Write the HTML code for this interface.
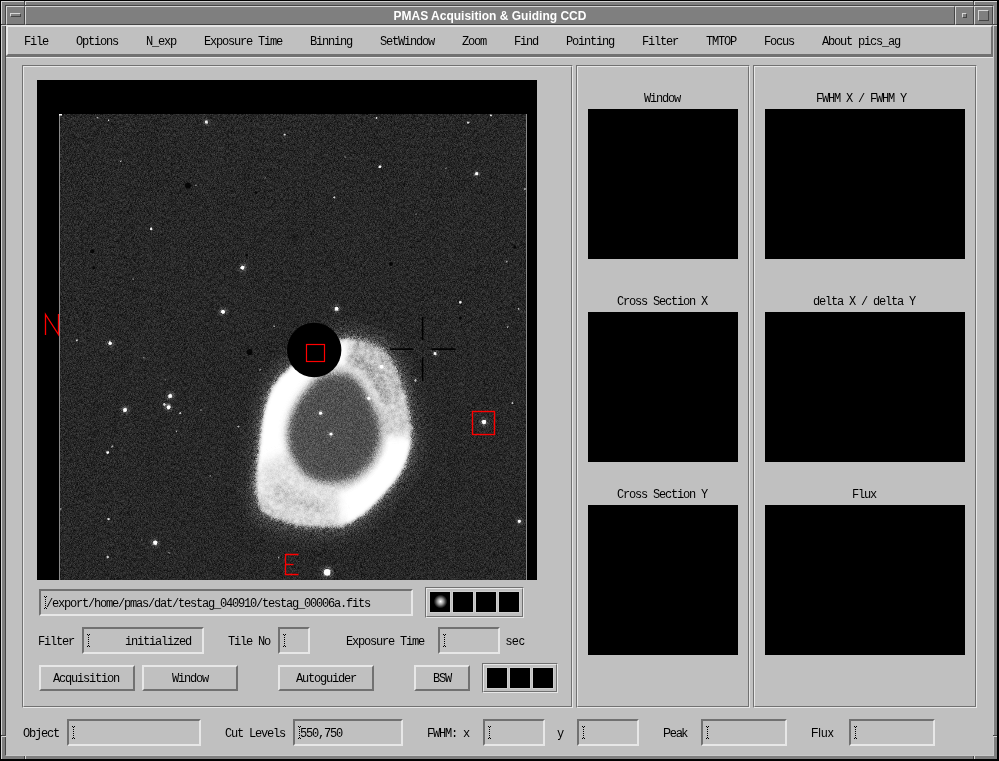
<!DOCTYPE html>
<html><head><meta charset="utf-8">
<style>
html,body{margin:0;padding:0;}
body{width:999px;height:761px;position:relative;overflow:hidden;background:#000;font-family:"Liberation Mono",monospace;}
div{box-sizing:border-box;}
.a{position:absolute;}
.t{position:absolute;font:12px "Liberation Mono",monospace;letter-spacing:-1.2px;color:#000;white-space:pre;line-height:14px;will-change:transform;}
.s{position:absolute;font:12px "Liberation Sans",sans-serif;color:#000;white-space:pre;line-height:14px;will-change:transform;}
.fr{position:absolute;background:#7f7f7f;}
.wb{position:absolute;border-top:1px solid #d6d6d6;border-left:1px solid #d6d6d6;border-right:1px solid #454545;border-bottom:1px solid #454545;background:#7f7f7f;}
.fld{position:absolute;border-style:solid;border-width:2px;border-color:#717171 #e7e7e7 #e7e7e7 #717171;background:#c0c0c0;}
.btn{position:absolute;border-style:solid;border-width:2px;border-color:#e7e7e7 #717171 #717171 #e7e7e7;background:#c0c0c0;}
.eo{position:absolute;border-style:solid;border-width:1px;border-color:#717171 #e7e7e7 #e7e7e7 #717171;}
.ei{position:absolute;left:0;top:0;right:0;bottom:0;border-style:solid;border-width:1px;border-color:#e7e7e7 #717171 #717171 #e7e7e7;}
.blk{position:absolute;background:#000;}
.cur{position:absolute;width:4px;height:13px;}
</style></head><body>
<!-- window manager frame -->
<div class="fr" style="left:1px;top:1px;width:996px;height:758px;border-top:1px solid #d6d6d6;border-left:1px solid #d6d6d6;"></div>
<div class="a" style="left:5px;top:5px;width:989px;height:751px;border-top:1px solid #454545;border-left:1px solid #454545;border-right:1px solid #c9c9c9;border-bottom:1px solid #c9c9c9;"></div>
<!-- corner separators -->
<div class="a" style="left:1px;top:24px;width:5px;height:1px;background:#454545"></div>
<div class="a" style="left:1px;top:25px;width:5px;height:1px;background:#d6d6d6"></div>
<div class="a" style="left:993px;top:24px;width:4px;height:1px;background:#454545"></div>
<div class="a" style="left:993px;top:25px;width:4px;height:1px;background:#d6d6d6"></div>
<div class="a" style="left:1px;top:735px;width:5px;height:1px;background:#454545"></div>
<div class="a" style="left:1px;top:736px;width:5px;height:1px;background:#d6d6d6"></div>
<div class="a" style="left:993px;top:735px;width:4px;height:1px;background:#454545"></div>
<div class="a" style="left:993px;top:736px;width:4px;height:1px;background:#d6d6d6"></div>
<div class="a" style="left:24px;top:1px;width:1px;height:4px;background:#454545"></div>
<div class="a" style="left:25px;top:1px;width:1px;height:4px;background:#d6d6d6"></div>
<div class="a" style="left:973px;top:1px;width:1px;height:4px;background:#454545"></div>
<div class="a" style="left:974px;top:1px;width:1px;height:4px;background:#d6d6d6"></div>
<div class="a" style="left:24px;top:756px;width:1px;height:3px;background:#454545"></div>
<div class="a" style="left:25px;top:756px;width:1px;height:3px;background:#d6d6d6"></div>
<div class="a" style="left:973px;top:756px;width:1px;height:3px;background:#454545"></div>
<div class="a" style="left:974px;top:756px;width:1px;height:3px;background:#d6d6d6"></div>
<!-- title bar -->
<div class="wb" style="left:6px;top:6px;width:19px;height:19px;"></div>
<div class="a" style="left:10px;top:13px;width:11px;height:4px;border-top:1px solid #d6d6d6;border-left:1px solid #d6d6d6;border-right:1px solid #454545;border-bottom:1px solid #454545;"></div>
<div class="wb" style="left:25px;top:6px;width:930px;height:19px;"></div>
<div class="a" style="left:25px;top:8px;width:930px;height:17px;font:bold 12px 'Liberation Sans',sans-serif;color:#fff;text-align:center;line-height:17px;will-change:transform;">PMAS Acquisition &amp; Guiding CCD</div>
<div class="wb" style="left:955px;top:6px;width:19px;height:19px;"></div>
<div class="a" style="left:962px;top:13px;width:5px;height:5px;border-top:1px solid #d6d6d6;border-left:1px solid #d6d6d6;border-right:1px solid #454545;border-bottom:1px solid #454545;"></div>
<div class="wb" style="left:974px;top:6px;width:19px;height:19px;"></div>
<div class="a" style="left:978px;top:10px;width:11px;height:11px;border-top:1px solid #d6d6d6;border-left:1px solid #d6d6d6;border-right:1px solid #454545;border-bottom:1px solid #454545;"></div>
<!-- client -->
<div class="a" style="left:6px;top:25px;width:987px;height:730px;background:#c0c0c0;"></div>
<!-- menubar -->
<div class="btn" style="left:6px;top:25px;width:987px;height:31px;"></div>
<div class="a" style="left:6px;top:56px;width:987px;height:1px;background:#717171"></div>
<div class="a" style="left:6px;top:57px;width:987px;height:1px;background:#e7e7e7"></div>
<div class="t" style="left:24px;top:35px">File</div>
<div class="t" style="left:76px;top:35px">Options</div>
<div class="t" style="left:146px;top:35px">N_exp</div>
<div class="t" style="left:204px;top:35px">Exposure Time</div>
<div class="t" style="left:310px;top:35px">Binning</div>
<div class="t" style="left:380px;top:35px">SetWindow</div>
<div class="t" style="left:462px;top:35px">Zoom</div>
<div class="t" style="left:514px;top:35px">Find</div>
<div class="t" style="left:566px;top:35px">Pointing</div>
<div class="t" style="left:642px;top:35px">Filter</div>
<div class="t" style="left:706px;top:35px">TMTOP</div>
<div class="t" style="left:764px;top:35px">Focus</div>
<div class="t" style="left:822px;top:35px">About pics_ag</div>

<!-- panels -->
<div class="eo" style="left:22px;top:65px;width:551px;height:643px;"><div class="ei"></div></div>
<div class="eo" style="left:576px;top:65px;width:174px;height:643px;"><div class="ei"></div></div>
<div class="eo" style="left:753px;top:65px;width:224px;height:643px;"><div class="ei"></div></div>

<!-- image area -->
<div class="blk" style="left:37px;top:80px;width:500px;height:500px;"></div>
<!--IMAGE-->
<svg class="a" style="left:37px;top:80px" width="500" height="500" viewBox="37 80 500 500">
<defs>
<clipPath id="ic"><rect x="59" y="114" width="468" height="466"/></clipPath>
<filter id="b1" x="-50%" y="-50%" width="200%" height="200%"><feGaussianBlur stdDeviation="1.5"/></filter>
<filter id="b2" x="-50%" y="-50%" width="200%" height="200%"><feGaussianBlur stdDeviation="2.5"/></filter>
<filter id="b3" x="-50%" y="-50%" width="200%" height="200%"><feGaussianBlur stdDeviation="3.5"/></filter>
<filter id="b4" x="-50%" y="-50%" width="200%" height="200%"><feGaussianBlur stdDeviation="5"/></filter>
<filter id="b8" x="-50%" y="-50%" width="200%" height="200%"><feGaussianBlur stdDeviation="8"/></filter>
<filter id="sb" x="-100%" y="-100%" width="300%" height="300%"><feGaussianBlur stdDeviation="0.6"/></filter>
<filter id="noise" x="0" y="0" width="100%" height="100%" color-interpolation-filters="sRGB">
<feTurbulence type="fractalNoise" baseFrequency="1.7" numOctaves="1" seed="11"/>
<feGaussianBlur stdDeviation="0.55"/>
<feColorMatrix type="matrix" values="1.3 0 0 0 -0.15  1.3 0 0 0 -0.15  1.3 0 0 0 -0.15  0 0 0 0 1"/>
</filter>
<filter id="mott" x="0" y="0" width="100%" height="100%" color-interpolation-filters="sRGB">
<feTurbulence type="fractalNoise" baseFrequency="0.2" numOctaves="2" seed="4"/>
<feColorMatrix type="matrix" values="1.4 0 0 0 -0.2  1.4 0 0 0 -0.2  1.4 0 0 0 -0.2  0 0 0 0 1"/>
</filter>
<clipPath id="ringclip"><polygon points="343.3,336.1 345.3,336.0 347.5,336.1 349.7,336.3 352.0,336.6 354.2,336.9 356.5,337.3 358.7,337.7 360.8,338.1 362.9,338.6 365.0,339.1 367.0,339.7 369.0,340.4 371.0,341.1 372.8,341.8 374.6,342.5 376.3,343.3 377.8,344.0 379.3,344.8 380.6,345.5 381.8,346.3 383.0,347.2 384.2,348.1 385.4,349.2 386.6,350.5 387.8,351.9 389.1,353.6 390.3,355.4 391.5,357.3 392.7,359.3 393.8,361.2 394.9,363.1 395.9,364.9 396.7,366.5 397.5,367.9 398.2,369.2 398.9,370.5 399.5,372.0 400.2,373.6 400.9,375.5 401.7,377.8 402.7,380.5 403.7,383.6 404.9,386.9 406.0,390.4 407.1,394.1 408.2,397.8 409.1,401.4 409.9,404.9 410.5,408.3 411.0,411.8 411.5,415.3 411.9,418.9 412.1,422.3 412.4,425.7 412.5,428.9 412.6,431.9 412.7,434.6 412.8,437.1 412.8,439.5 412.7,441.7 412.5,443.9 412.2,446.1 411.8,448.4 411.3,450.9 410.7,453.5 409.9,456.2 409.1,458.9 408.1,461.6 407.1,464.4 405.9,467.1 404.5,469.9 403.1,472.6 401.4,475.4 399.6,478.1 397.6,480.9 395.5,483.6 393.3,486.4 391.1,489.1 388.8,491.7 386.6,494.3 384.4,496.8 382.1,499.3 379.9,501.8 377.5,504.2 375.2,506.6 372.8,508.9 370.3,511.1 367.8,513.2 365.3,515.2 362.8,517.2 360.2,519.2 357.5,521.0 354.8,522.7 352.0,524.3 349.2,525.7 346.2,526.8 343.1,527.7 339.8,528.4 336.3,528.9 332.9,529.2 329.4,529.4 326.0,529.5 322.7,529.6 319.6,529.7 316.8,529.8 314.1,529.8 311.5,529.8 309.0,529.8 306.5,529.6 304.0,529.4 301.6,529.1 299.0,528.7 296.5,528.2 293.8,527.6 291.2,526.9 288.6,526.1 286.0,525.3 283.4,524.4 280.9,523.4 278.4,522.5 275.9,521.6 273.4,520.7 270.8,519.8 268.2,518.8 265.8,517.7 263.6,516.5 261.6,515.0 259.9,513.2 258.5,511.1 257.4,508.7 256.5,506.0 255.8,503.1 255.3,500.2 254.9,497.2 254.5,494.3 254.2,491.6 254.0,489.1 254.0,486.8 254.1,484.6 254.2,482.4 254.5,480.1 254.8,477.5 255.1,474.5 255.5,471.0 255.8,466.8 256.3,462.0 256.8,456.7 257.3,451.2 257.9,445.6 258.5,440.2 259.0,435.2 259.6,430.8 260.1,427.0 260.6,423.5 261.0,420.4 261.5,417.5 262.0,414.6 262.5,411.9 263.2,409.1 264.0,406.1 264.9,403.0 265.9,399.9 266.9,396.8 268.0,393.7 269.2,390.6 270.6,387.7 272.1,384.8 273.8,382.0 275.7,379.3 277.9,376.8 280.2,374.3 282.6,371.9 285.1,369.5 287.7,367.3 290.3,365.0 292.9,362.8 295.5,360.7 298.2,358.5 301.1,356.5 303.9,354.4 306.7,352.5 309.5,350.7 312.1,349.0 314.5,347.4 316.7,346.0 318.8,344.7 320.8,343.5 322.7,342.5 324.6,341.5 326.4,340.7 328.1,339.9 329.9,339.1 331.7,338.5 333.3,337.9 334.9,337.4 336.5,337.0 338.1,336.6 339.7,336.3 341.5,336.2"/></clipPath>
<mask id="nm" maskUnits="userSpaceOnUse" x="59" y="114" width="468" height="466"><rect x="59" y="114" width="468" height="466" fill="#fff"/><polygon points="343.0,339.0 344.9,339.0 347.0,339.1 349.2,339.3 351.4,339.5 353.6,339.8 355.8,340.2 357.9,340.6 360.0,341.0 362.0,341.5 364.0,342.0 366.0,342.6 367.9,343.2 369.8,343.8 371.6,344.5 373.4,345.3 375.0,346.0 376.5,346.7 377.9,347.4 379.2,348.2 380.4,348.9 381.5,349.8 382.7,350.7 383.8,351.8 385.0,353.0 386.2,354.4 387.4,356.0 388.6,357.8 389.8,359.7 390.9,361.6 392.0,363.4 393.0,365.3 394.0,367.0 394.9,368.5 395.6,369.9 396.3,371.2 396.9,372.5 397.5,373.9 398.2,375.4 398.9,377.3 399.7,379.5 400.6,382.1 401.6,385.1 402.7,388.4 403.8,391.8 404.9,395.3 405.9,398.9 406.8,402.4 407.6,405.8 408.2,409.1 408.7,412.5 409.2,416.0 409.5,419.4 409.8,422.7 410.0,426.0 410.2,429.1 410.3,432.0 410.4,434.7 410.4,437.1 410.4,439.4 410.3,441.6 410.2,443.7 409.9,445.9 409.5,448.1 409.0,450.5 408.4,453.0 407.7,455.6 406.8,458.2 405.9,460.9 404.9,463.6 403.7,466.3 402.4,468.9 401.0,471.6 399.4,474.2 397.6,476.9 395.7,479.6 393.6,482.3 391.5,484.9 389.3,487.5 387.2,490.1 385.0,492.6 382.8,495.1 380.7,497.5 378.5,499.9 376.2,502.3 373.9,504.6 371.6,506.8 369.2,509.0 366.8,511.0 364.3,513.0 361.9,514.9 359.3,516.8 356.8,518.6 354.1,520.2 351.5,521.8 348.7,523.1 345.8,524.2 342.8,525.1 339.6,525.7 336.2,526.2 332.8,526.5 329.5,526.7 326.2,526.8 323.0,526.9 320.0,527.0 317.2,527.1 314.6,527.1 312.1,527.1 309.6,527.0 307.2,526.9 304.9,526.7 302.5,526.4 300.0,526.0 297.5,525.5 295.0,524.9 292.4,524.2 289.9,523.5 287.4,522.7 284.9,521.8 282.4,520.9 280.0,520.0 277.6,519.1 275.1,518.2 272.6,517.4 270.1,516.4 267.7,515.4 265.6,514.2 263.6,512.7 262.0,511.0 260.7,508.9 259.6,506.6 258.7,504.0 258.1,501.2 257.5,498.3 257.1,495.5 256.8,492.7 256.5,490.0 256.3,487.6 256.3,485.4 256.3,483.3 256.5,481.1 256.8,478.8 257.0,476.3 257.4,473.4 257.7,470.0 258.1,465.9 258.5,461.2 259.0,456.1 259.5,450.8 260.1,445.4 260.6,440.1 261.2,435.3 261.7,431.0 262.2,427.3 262.6,423.9 263.1,420.9 263.5,418.0 264.0,415.3 264.6,412.6 265.2,409.9 266.0,407.0 266.9,404.0 267.8,401.0 268.8,398.0 269.9,395.0 271.0,392.0 272.4,389.1 273.8,386.3 275.5,383.6 277.4,381.0 279.4,378.5 281.7,376.1 284.0,373.8 286.5,371.5 289.0,369.3 291.5,367.1 294.0,365.0 296.5,362.9 299.2,360.8 302.0,358.8 304.7,356.8 307.5,355.0 310.1,353.2 312.6,351.5 315.0,350.0 317.2,348.6 319.2,347.4 321.2,346.3 323.0,345.2 324.8,344.3 326.5,343.5 328.3,342.7 330.0,342.0 331.7,341.4 333.3,340.8 334.8,340.3 336.4,339.9 337.9,339.5 339.5,339.3 341.2,339.1" fill="#8c8c8c" filter="url(#b2)"/></mask>
</defs>
<g clip-path="url(#ic)">
<rect x="59" y="114" width="468" height="466" fill="#272727"/>
<polygon points="344.1,329.2 346.2,329.2 348.5,329.3 350.9,329.5 353.3,329.8 355.8,330.1 358.2,330.5 360.5,330.9 362.8,331.4 365.0,331.9 367.2,332.5 369.4,333.1 371.5,333.8 373.6,334.5 375.6,335.3 377.5,336.1 379.3,336.9 380.9,337.7 382.5,338.5 383.9,339.3 385.2,340.1 386.5,341.1 387.8,342.1 389.0,343.3 390.3,344.6 391.6,346.2 392.9,347.9 394.3,349.9 395.5,351.9 396.8,354.0 398.0,356.1 399.1,358.1 400.2,360.0 401.1,361.7 402.0,363.2 402.7,364.6 403.4,366.0 404.1,367.6 404.8,369.3 405.6,371.3 406.5,373.8 407.5,376.6 408.6,379.9 409.8,383.5 411.0,387.3 412.2,391.2 413.3,395.1 414.3,399.0 415.2,402.7 415.8,406.3 416.4,410.1 416.9,413.9 417.3,417.6 417.6,421.3 417.8,424.9 418.0,428.3 418.1,431.5 418.2,434.4 418.3,437.1 418.2,439.6 418.2,442.0 418.0,444.4 417.7,446.8 417.3,449.2 416.7,451.9 416.0,454.6 415.2,457.5 414.3,460.3 413.3,463.3 412.2,466.2 410.9,469.2 409.5,472.1 407.9,475.1 406.1,478.0 404.2,480.9 402.1,483.9 399.8,486.8 397.5,489.7 395.1,492.6 392.7,495.4 390.3,498.2 387.9,500.9 385.5,503.6 383.1,506.2 380.6,508.8 378.1,511.4 375.6,513.8 372.9,516.2 370.3,518.4 367.6,520.6 364.8,522.7 362.1,524.8 359.3,526.7 356.4,528.6 353.4,530.2 350.3,531.7 347.2,532.9 343.8,533.9 340.3,534.6 336.6,535.1 332.9,535.4 329.2,535.7 325.6,535.8 322.1,535.9 318.8,536.0 315.7,536.1 312.9,536.1 310.1,536.1 307.4,536.1 304.8,535.9 302.2,535.7 299.5,535.3 296.8,534.9 294.0,534.4 291.2,533.7 288.5,533.0 285.7,532.1 282.9,531.3 280.1,530.3 277.4,529.3 274.8,528.3 272.1,527.3 269.4,526.4 266.6,525.4 263.9,524.4 261.3,523.2 258.9,521.9 256.8,520.3 255.0,518.4 253.5,516.1 252.3,513.5 251.4,510.7 250.7,507.6 250.1,504.5 249.6,501.3 249.3,498.2 248.9,495.3 248.7,492.6 248.7,490.2 248.8,487.9 249.0,485.5 249.2,483.0 249.6,480.2 249.9,477.0 250.3,473.3 250.7,468.8 251.1,463.7 251.7,458.0 252.3,452.1 252.9,446.2 253.5,440.5 254.1,435.1 254.7,430.4 255.2,426.3 255.7,422.6 256.2,419.3 256.7,416.1 257.2,413.1 257.8,410.2 258.5,407.2 259.4,404.0 260.4,400.7 261.4,397.4 262.5,394.1 263.6,390.8 265.0,387.5 266.4,384.3 268.0,381.2 269.9,378.3 271.9,375.4 274.2,372.7 276.6,370.0 279.2,367.5 281.9,365.0 284.7,362.5 287.5,360.1 290.2,357.8 293.0,355.5 295.9,353.2 299.0,351.0 302.0,348.8 305.0,346.7 307.9,344.8 310.7,343.0 313.3,341.3 315.7,339.8 317.9,338.4 320.1,337.2 322.1,336.1 324.1,335.1 326.0,334.1 327.9,333.3 329.8,332.5 331.7,331.8 333.4,331.2 335.1,330.6 336.8,330.2 338.5,329.8 340.3,329.5 342.1,329.3" fill="#4e4e4e" filter="url(#b8)"/>
<polygon points="343.0,339.0 344.9,339.0 347.0,339.1 349.2,339.3 351.4,339.5 353.6,339.8 355.8,340.2 357.9,340.6 360.0,341.0 362.0,341.5 364.0,342.0 366.0,342.6 367.9,343.2 369.8,343.8 371.6,344.5 373.4,345.3 375.0,346.0 376.5,346.7 377.9,347.4 379.2,348.2 380.4,348.9 381.5,349.8 382.7,350.7 383.8,351.8 385.0,353.0 386.2,354.4 387.4,356.0 388.6,357.8 389.8,359.7 390.9,361.6 392.0,363.4 393.0,365.3 394.0,367.0 394.9,368.5 395.6,369.9 396.3,371.2 396.9,372.5 397.5,373.9 398.2,375.4 398.9,377.3 399.7,379.5 400.6,382.1 401.6,385.1 402.7,388.4 403.8,391.8 404.9,395.3 405.9,398.9 406.8,402.4 407.6,405.8 408.2,409.1 408.7,412.5 409.2,416.0 409.5,419.4 409.8,422.7 410.0,426.0 410.2,429.1 410.3,432.0 410.4,434.7 410.4,437.1 410.4,439.4 410.3,441.6 410.2,443.7 409.9,445.9 409.5,448.1 409.0,450.5 408.4,453.0 407.7,455.6 406.8,458.2 405.9,460.9 404.9,463.6 403.7,466.3 402.4,468.9 401.0,471.6 399.4,474.2 397.6,476.9 395.7,479.6 393.6,482.3 391.5,484.9 389.3,487.5 387.2,490.1 385.0,492.6 382.8,495.1 380.7,497.5 378.5,499.9 376.2,502.3 373.9,504.6 371.6,506.8 369.2,509.0 366.8,511.0 364.3,513.0 361.9,514.9 359.3,516.8 356.8,518.6 354.1,520.2 351.5,521.8 348.7,523.1 345.8,524.2 342.8,525.1 339.6,525.7 336.2,526.2 332.8,526.5 329.5,526.7 326.2,526.8 323.0,526.9 320.0,527.0 317.2,527.1 314.6,527.1 312.1,527.1 309.6,527.0 307.2,526.9 304.9,526.7 302.5,526.4 300.0,526.0 297.5,525.5 295.0,524.9 292.4,524.2 289.9,523.5 287.4,522.7 284.9,521.8 282.4,520.9 280.0,520.0 277.6,519.1 275.1,518.2 272.6,517.4 270.1,516.4 267.7,515.4 265.6,514.2 263.6,512.7 262.0,511.0 260.7,508.9 259.6,506.6 258.7,504.0 258.1,501.2 257.5,498.3 257.1,495.5 256.8,492.7 256.5,490.0 256.3,487.6 256.3,485.4 256.3,483.3 256.5,481.1 256.8,478.8 257.0,476.3 257.4,473.4 257.7,470.0 258.1,465.9 258.5,461.2 259.0,456.1 259.5,450.8 260.1,445.4 260.6,440.1 261.2,435.3 261.7,431.0 262.2,427.3 262.6,423.9 263.1,420.9 263.5,418.0 264.0,415.3 264.6,412.6 265.2,409.9 266.0,407.0 266.9,404.0 267.8,401.0 268.8,398.0 269.9,395.0 271.0,392.0 272.4,389.1 273.8,386.3 275.5,383.6 277.4,381.0 279.4,378.5 281.7,376.1 284.0,373.8 286.5,371.5 289.0,369.3 291.5,367.1 294.0,365.0 296.5,362.9 299.2,360.8 302.0,358.8 304.7,356.8 307.5,355.0 310.1,353.2 312.6,351.5 315.0,350.0 317.2,348.6 319.2,347.4 321.2,346.3 323.0,345.2 324.8,344.3 326.5,343.5 328.3,342.7 330.0,342.0 331.7,341.4 333.3,340.8 334.8,340.3 336.4,339.9 337.9,339.5 339.5,339.3 341.2,339.1" fill="#c4c4c4" filter="url(#b1)"/>
<polygon points="299.3,464.4 298.5,463.2 297.6,462.0 296.8,460.7 296.1,459.4 295.4,458.1 294.7,456.8 294.1,455.5 293.5,454.1 293.0,452.8 292.5,451.4 292.1,450.0 291.6,448.6 291.3,447.1 291.0,445.7 290.7,444.3 290.5,442.8 290.2,441.4 290.1,439.9 290.0,438.5 289.9,437.0 289.9,435.5 289.9,434.1 290.0,432.6 290.1,431.1 290.3,429.6 290.5,428.2 290.8,426.7 291.0,425.3 291.4,423.8 291.7,422.3 292.1,420.9 292.5,419.4 293.0,418.0 293.4,416.5 294.0,415.0 294.5,413.6 295.1,412.1 295.8,410.7 296.5,409.3 297.3,407.9 298.1,406.4 298.9,405.0 299.7,403.6 300.6,402.2 301.5,400.7 302.5,399.3 303.5,397.8 304.6,396.3 305.7,394.8 306.8,393.4 308.0,391.9 309.2,390.3 310.5,388.8 311.9,387.3 313.3,385.7 314.8,384.2 316.4,382.6 318.1,381.2 319.8,379.8 321.7,378.6 323.7,377.7 325.7,376.9 327.8,376.4 329.9,376.0 332.0,375.8 334.1,375.7 336.3,375.7 338.4,375.7 340.6,375.7 342.8,375.9 344.9,376.2 347.0,376.6 355.9,341.3 352.5,340.8 349.0,340.4 345.6,340.1 342.2,340.1 338.7,340.5 335.3,341.2 332.0,342.3 328.7,343.5 325.6,344.9 322.5,346.5 319.5,348.2 316.6,349.9 313.9,351.7 311.2,353.5 308.5,355.2 306.0,357.0 303.5,358.7 301.1,360.5 298.7,362.3 296.4,364.1 294.2,366.0 292.1,367.8 289.9,369.7 287.8,371.5 285.8,373.4 283.8,375.3 281.9,377.3 280.0,379.3 278.3,381.4 276.7,383.6 275.2,385.9 273.9,388.2 272.7,390.6 271.6,393.1 270.6,395.6 269.7,398.1 268.9,400.5 268.1,403.0 267.3,405.5 266.6,407.9 266.0,410.3 265.4,412.8 264.9,415.2 264.4,417.6 264.0,420.1 263.7,422.5 263.3,424.9 263.0,427.3 262.7,429.7 262.4,432.1 262.1,434.6 261.8,437.0 261.5,439.5 261.3,441.9 261.0,444.5 260.7,447.0 260.5,449.6 260.2,452.3 260.0,454.9 259.7,457.7 259.5,460.5 259.2,463.5 259.0,466.5 258.8,469.6 258.5,472.9 258.1,476.3 257.7,479.9 257.5,483.6 257.6,487.2 257.9,490.8 258.4,494.5 258.9,498.3" fill="#fff" filter="url(#b3)"/>
<polygon points="290.2,456.5 289.7,455.0 289.3,453.4 288.9,451.8 288.5,450.3 288.2,448.7 287.9,447.2 287.7,445.6 287.5,444.1 287.3,442.5 287.2,440.9 287.1,439.4 287.0,437.8 287.0,436.2 287.0,434.6 287.1,433.1 287.2,431.5 287.4,429.9 287.6,428.4 287.9,426.8 288.1,425.2 288.5,423.7 288.8,422.1 289.2,420.6 289.6,419.0 290.1,417.4 290.6,415.9 291.1,414.3 291.7,412.8 292.3,411.2 293.0,409.7 293.7,408.1 294.5,406.6 295.3,405.1 296.1,403.6 297.1,402.1 298.0,400.6 299.0,399.0 300.0,397.5 301.1,396.0 302.3,394.5 303.4,393.0 304.7,391.5 305.9,390.0 307.2,388.4 308.6,386.9 310.1,385.3 311.6,383.7 313.1,382.2 314.8,380.6 316.5,379.0 318.3,377.6 320.2,376.3 322.2,375.1 324.3,374.2 326.4,373.4 328.6,372.9 330.9,372.5 333.1,372.2 333.7,341.7 330.4,342.9 327.1,344.2 324.0,345.7 321.0,347.3 318.1,349.1 315.2,350.8 312.5,352.6 309.9,354.3 307.3,356.1 304.7,357.9 302.3,359.6 299.9,361.4 297.6,363.2 295.3,365.0 293.1,366.9 291.0,368.7 288.9,370.6 286.8,372.5 284.8,374.3 282.8,376.3 280.9,378.3 279.1,380.3 277.5,382.5 275.9,384.7 274.5,387.0 273.2,389.4 272.1,391.9 271.1,394.3 270.1,396.8 269.3,399.3 268.5,401.8 267.7,404.2 267.0,406.7 266.3,409.1 265.7,411.5 265.1,414.0 264.6,416.4 264.2,418.8 263.9,421.3 263.5,423.7 263.2,426.1 262.9,428.5 262.6,430.9 262.2,433.3 262.0,435.8 261.7,438.2 261.4,440.7 261.1,443.2 260.9,445.7 260.6,448.3 260.4,450.9 260.1,453.6 259.9,456.3 259.6,459.1 259.4,462.0 259.1,465.0 258.9,468.0 258.6,471.2" fill="#fff" filter="url(#b1)"/>
<polygon points="384.3,429.7 384.3,431.5 384.2,433.3 384.1,435.2 384.0,437.0 383.9,438.8 383.6,440.6 383.4,442.4 383.0,444.2 382.6,445.9 382.2,447.7 381.7,449.4 381.1,451.1 380.5,452.8 379.8,454.4 379.1,456.0 378.3,457.6 377.4,459.2 376.5,460.7 375.6,462.2 374.6,463.6 373.6,465.1 372.6,466.5 371.5,467.9 370.4,469.2 369.2,470.5 368.1,471.8 366.8,473.1 365.6,474.3 364.3,475.5 363.0,476.7 361.7,477.8 360.3,478.9 358.9,480.0 357.4,481.0 355.9,482.0 354.4,482.9 352.8,483.8 351.3,484.7 349.6,485.5 348.0,486.2 346.3,486.9 344.6,487.5 342.9,488.1 341.1,488.5 339.3,488.9 337.5,489.2 335.7,489.4 333.8,489.5 335.1,524.9 338.1,524.5 341.1,524.0 344.1,523.3 347.0,522.3 349.9,521.1 352.6,519.7 355.3,518.1 357.8,516.4 360.3,514.7 362.7,512.9 365.0,511.0 367.2,509.2 369.4,507.4 371.5,505.4 373.5,503.5 375.5,501.5 377.4,499.5 379.3,497.5 381.1,495.5 382.9,493.5 384.6,491.5 386.4,489.5 388.1,487.5 389.8,485.5 391.4,483.4 393.1,481.4 394.7,479.3 396.2,477.1 397.7,475.0 399.2,472.7 400.5,470.4 401.8,468.1 402.9,465.6 404.0,463.2 404.9,460.7 405.8,458.2 406.6,455.6 407.3,453.0 408.0,450.4 408.6,447.8 409.0,445.1 409.3,442.4 409.4,439.7 409.4,437.0 409.4,434.3 409.3,431.6 409.2,428.9 409.1,426.2" fill="#fff" filter="url(#b3)"/>
<polygon points="388.8,439.0 388.6,441.0 388.4,442.9 388.0,444.9 387.6,446.8 387.1,448.7 386.5,450.6 385.9,452.5 385.3,454.3 384.5,456.1 383.7,457.9 382.9,459.6 381.9,461.4 381.0,463.0 379.9,464.7 378.8,466.3 377.7,467.8 376.6,469.4 375.4,470.9 374.2,472.4 372.9,473.8 371.6,475.3 370.3,476.7 369.0,478.0 367.6,479.4 366.2,480.7 364.7,482.0 363.2,483.3 361.7,484.6 360.2,485.8 358.6,486.9 356.9,488.1 355.2,489.1 353.5,490.2 351.7,491.2 349.9,492.1 348.1,493.0 346.2,493.8 344.2,494.5 342.2,495.1 347.0,522.3 349.9,521.1 352.6,519.7 355.3,518.1 357.8,516.4 360.3,514.7 362.7,512.9 365.0,511.0 367.2,509.2 369.4,507.4 371.5,505.4 373.5,503.5 375.5,501.5 377.4,499.5 379.3,497.5 381.1,495.5 382.9,493.5 384.6,491.5 386.4,489.5 388.1,487.5 389.8,485.5 391.4,483.4 393.1,481.4 394.7,479.3 396.2,477.1 397.7,475.0 399.2,472.7 400.5,470.4 401.8,468.1 402.9,465.6 404.0,463.2 404.9,460.7 405.8,458.2 406.6,455.6 407.3,453.0 408.0,450.4 408.6,447.8 409.0,445.1 409.3,442.4 409.4,439.7" fill="#fff" filter="url(#b1)"/>
<polygon points="335.8,480.2 334.3,480.3 332.8,480.4 331.2,480.4 329.7,480.3 328.2,480.2 326.7,480.1 325.2,479.9 323.7,479.7 322.2,479.4 320.7,479.0 319.3,478.7 317.8,478.2 316.4,477.8 314.9,477.2 313.5,476.6 312.1,476.0 310.8,475.3 309.5,474.5 308.2,473.6 307.0,472.7 305.8,471.7 304.7,470.7 303.6,469.6 302.6,468.5 301.6,467.4 300.7,466.2 299.8,465.0 298.9,463.8 298.0,462.6 297.2,461.3 296.5,460.1 295.7,458.8 295.0,457.5 294.4,456.2 293.8,454.8 293.2,453.5 292.7,452.1 261.6,464.0 261.4,467.0 261.1,470.0 260.9,473.2 260.6,476.6 260.3,480.1 260.3,483.6 260.6,487.0 261.0,490.5 261.5,494.1 262.2,497.6 263.2,501.1 264.6,504.4 266.5,507.2 269.0,509.4 272.0,511.2 275.1,512.5 278.3,513.7 281.4,514.9 284.5,516.1 287.5,517.2 290.6,518.3 293.7,519.2 296.7,520.1 299.8,520.8 302.9,521.4 306.1,521.9 309.2,522.2 312.3,522.3 315.4,522.4 318.5,522.4 321.5,522.3 324.5,522.2 327.5,522.1 330.5,522.0 333.5,521.8 336.4,521.5 339.4,521.1" fill="#e2e2e2" filter="url(#b4)"/>
<polygon points="346.9,367.1 349.3,367.5 351.7,368.2 354.0,369.2 356.2,370.4 358.3,371.9 360.3,373.4 362.2,375.1 364.0,376.9 365.7,378.7 367.2,380.7 368.6,382.7 369.9,384.8 371.2,386.8 372.4,388.9 373.5,390.9 374.6,392.9 375.6,394.9 376.5,396.9 377.4,398.9 378.3,400.8 379.1,402.7 380.0,404.7 380.7,406.6 381.5,408.4 382.2,410.3 405.7,397.8 404.8,395.0 403.9,392.1 403.0,389.1 402.0,386.1 401.0,383.1 399.9,380.0 398.8,376.9 397.5,373.8 396.0,370.7 394.4,367.7 392.7,364.7 390.9,361.6 389.0,358.5 387.0,355.5 384.7,352.7 382.1,350.2 379.2,348.2 376.1,346.5 372.9,345.1 369.7,343.8 366.3,342.7 363.0,341.7 359.6,340.9 356.1,340.2 352.7,339.7" fill="#b4b4b4" filter="url(#b3)"/>
<polygon points="355.6,364.4 358.0,365.6 360.3,367.0 362.5,368.5 364.6,370.2 366.6,371.9 368.5,373.8 370.2,375.8 371.8,378.0 373.3,380.2 374.6,382.5 375.9,384.7 377.1,386.9 378.3,389.1 379.4,391.2 380.4,393.4 381.3,395.6 382.2,397.8 383.1,399.9 383.9,402.0 384.7,404.0 392.2,399.4 391.3,397.0 390.4,394.6 389.5,392.1 388.5,389.6 387.5,387.0 386.4,384.5 385.2,382.0 383.8,379.5 382.4,376.9 380.9,374.4 379.4,371.8 377.7,369.3 375.8,366.9 373.8,364.7 371.5,362.7 369.1,361.0 366.5,359.4 363.9,358.0 361.2,356.7 358.4,355.6" fill="#aaaaaa" filter="url(#b3)"/>
<polygon points="354.5,352.9 357.5,353.7 360.3,354.7 363.1,355.9 365.9,357.2 368.5,358.7 371.1,360.3 373.5,362.1 375.7,364.2 377.7,366.6 379.5,369.1 381.2,371.7 382.7,374.3 384.2,376.9 385.6,379.5 386.9,382.1 388.1,384.7 389.2,387.3 390.2,389.9 391.2,392.4 392.1,394.9 393.0,397.4 393.8,399.8 400.0,396.1 399.2,393.4 398.2,390.6 397.2,387.8 396.2,385.0 395.2,382.1 394.0,379.2 392.7,376.3 391.3,373.4 389.7,370.6 388.1,367.7 386.4,364.8 384.5,362.0 382.5,359.2 380.3,356.7 377.7,354.5 375.0,352.7 372.1,351.1 369.1,349.7 366.0,348.4 362.9,347.3 359.7,346.4 356.5,345.7" fill="#c8c8c8" filter="url(#b3)"/>
<polygon points="323.7,377.7 325.7,376.9 327.8,376.4 329.9,376.0 332.0,375.8 334.1,375.7 336.3,375.7 338.4,375.7 340.6,375.7 342.8,375.9 344.9,376.2 347.0,376.6 349.1,377.3 351.0,378.4 352.9,379.7 354.5,381.2 356.1,382.9 357.5,384.7 358.9,386.4 360.2,388.2 361.4,390.0 362.5,391.8 363.6,393.5 364.6,395.3 365.6,397.0 366.5,398.7 367.4,400.3 368.3,402.0 369.1,403.6 369.9,405.2 370.7,406.7 371.5,408.3 372.3,409.8 373.0,411.4 373.7,412.9 374.3,414.5 375.0,416.1 375.5,417.6 376.0,419.2 376.4,420.8 376.8,422.4 377.2,424.0 386.7,421.3 386.4,419.3 386.0,417.4 385.5,415.4 385.0,413.4 384.4,411.4 383.7,409.5 383.0,407.5 382.3,405.6 381.5,403.6 380.7,401.6 379.8,399.6 378.9,397.6 378.0,395.6 377.0,393.5 376.0,391.4 374.9,389.4 373.7,387.3 372.5,385.2 371.2,383.0 369.9,380.9 368.4,378.8 366.8,376.8 365.0,375.0 363.1,373.2 361.1,371.6 359.1,370.0 356.9,368.6 354.6,367.4 352.2,366.4 349.8,365.7 347.3,365.2 344.7,364.9 342.2,364.7 339.6,364.7 337.1,364.8 334.5,365.0 332.0,365.4 329.5,366.0 327.1,366.7 324.7,367.5 322.4,368.5" fill="#e6e6e6" filter="url(#b2)"/>
<polygon points="326.4,501.2 324.1,501.2 321.8,501.1 319.6,501.0 317.3,500.9 315.0,500.6 312.7,500.3 310.4,499.8 308.1,499.3 305.8,498.7 303.6,497.9 301.4,497.1 299.2,496.2 297.0,495.3 294.8,494.2 292.6,493.2 290.5,492.1 288.3,490.9 286.3,489.5 284.6,487.9 283.1,485.9 281.9,483.7 281.0,481.3 270.6,490.4 271.5,493.4 272.8,496.2 274.5,498.6 276.7,500.6 279.2,502.2 281.9,503.5 284.7,504.6 287.4,505.7 290.1,506.8 292.7,507.9 295.4,508.9 298.1,509.8 300.8,510.6 303.5,511.3 306.2,511.8 309.0,512.3 311.7,512.6 314.5,512.8 317.2,512.9 320.0,512.9 322.7,512.9 325.4,512.9" fill="#c6c6c6" filter="url(#b4)"/>
<polygon points="374.5,410.4 375.2,412.0 375.9,413.7 376.5,415.3 377.1,416.9 377.6,418.6 378.0,420.2 378.4,421.9 378.8,423.6 379.0,425.3 379.2,427.0 379.4,428.6 379.4,430.3 379.4,432.0 379.3,433.7 379.2,435.4 408.7,434.3 408.7,431.6 408.6,429.0 408.4,426.3 408.2,423.6 408.0,420.8 407.8,418.1 407.5,415.4 407.1,412.6 406.6,409.8 406.1,407.0 405.5,404.3 404.8,401.5 404.1,398.7 403.3,395.9 402.4,393.0" fill="#d0d0d0" filter="url(#b3)"/>
<rect x="240" y="330" width="190" height="210" clip-path="url(#ringclip)" filter="url(#mott)" style="mix-blend-mode:overlay" opacity="0.45"/>
<polygon points="334.4,369.6 336.3,369.5 338.4,369.5 340.5,369.6 342.7,369.7 344.8,369.9 346.9,370.2 348.9,370.7 350.7,371.3 352.3,372.1 353.8,373.0 355.1,374.1 356.4,375.3 357.7,376.6 358.9,378.0 360.2,379.5 361.5,381.2 362.9,383.1 364.3,385.2 365.7,387.4 367.1,389.8 368.5,392.2 369.8,394.7 371.1,397.1 372.4,399.4 373.6,401.7 374.7,403.9 375.9,406.2 376.9,408.5 378.0,410.8 378.9,413.0 379.7,415.2 380.4,417.4 381.0,419.5 381.5,421.5 381.8,423.5 382.1,425.4 382.3,427.4 382.4,429.4 382.4,431.5 382.3,433.7 382.1,436.0 381.8,438.4 381.4,440.9 380.9,443.5 380.3,446.0 379.6,448.6 378.8,451.1 377.8,453.5 376.6,455.9 375.3,458.3 373.8,460.7 372.3,463.1 370.6,465.4 368.8,467.6 367.0,469.6 365.1,471.5 363.1,473.3 361.1,475.0 358.9,476.5 356.7,478.0 354.3,479.3 352.0,480.5 349.5,481.5 347.1,482.4 344.5,483.2 341.9,483.7 339.1,484.2 336.4,484.5 333.6,484.7 330.8,484.7 328.0,484.6 325.4,484.3 322.8,483.9 320.2,483.4 317.6,482.7 315.0,481.9 312.5,481.0 310.0,479.8 307.7,478.5 305.5,477.0 303.4,475.3 301.3,473.4 299.3,471.2 297.4,468.9 295.6,466.5 293.9,464.0 292.4,461.5 291.1,459.0 289.9,456.5 288.9,453.8 288.0,451.1 287.3,448.3 286.7,445.5 286.2,442.7 285.9,440.0 285.7,437.2 285.7,434.5 285.8,431.7 286.1,428.9 286.5,426.2 287.1,423.4 287.7,420.7 288.4,418.1 289.2,415.6 290.0,413.1 291.0,410.7 292.0,408.4 293.1,406.2 294.3,404.0 295.6,401.8 296.9,399.7 298.2,397.5 299.6,395.3 301.2,393.1 302.8,391.0 304.4,388.8 306.1,386.7 307.8,384.7 309.4,382.9 310.9,381.2 312.3,379.7 313.7,378.3 315.0,377.0 316.3,375.9 317.6,374.8 319.0,373.8 320.3,373.0 321.8,372.2 323.2,371.5 324.7,371.0 326.2,370.6 327.8,370.2 329.3,370.0 331.0,369.8 332.7,369.6" fill="#a0a0a0" opacity="0.6" filter="url(#b3)"/>
<polygon points="334.2,374.5 336.0,374.4 337.9,374.4 339.9,374.5 341.9,374.6 343.9,374.8 345.8,375.1 347.7,375.5 349.3,376.1 350.8,376.8 352.2,377.7 353.5,378.7 354.7,379.7 355.8,381.0 356.9,382.3 358.1,383.7 359.3,385.3 360.6,387.0 361.9,389.0 363.2,391.0 364.5,393.2 365.8,395.5 367.1,397.7 368.3,400.0 369.4,402.1 370.5,404.2 371.6,406.3 372.7,408.5 373.7,410.6 374.6,412.7 375.5,414.8 376.2,416.8 376.9,418.8 377.4,420.8 377.9,422.7 378.2,424.5 378.5,426.3 378.6,428.1 378.7,430.0 378.7,431.9 378.6,433.9 378.4,436.1 378.2,438.3 377.8,440.7 377.4,443.0 376.8,445.4 376.1,447.7 375.4,450.1 374.4,452.3 373.4,454.5 372.1,456.8 370.8,459.0 369.4,461.2 367.8,463.3 366.2,465.4 364.5,467.3 362.7,469.0 360.9,470.7 359.0,472.2 356.9,473.7 354.9,475.0 352.7,476.2 350.5,477.3 348.3,478.3 346.0,479.1 343.6,479.8 341.1,480.3 338.6,480.8 336.0,481.0 333.4,481.2 330.9,481.2 328.3,481.1 325.9,480.9 323.5,480.5 321.0,480.0 318.6,479.4 316.2,478.6 313.9,477.8 311.6,476.7 309.5,475.5 307.4,474.1 305.4,472.5 303.5,470.7 301.7,468.7 299.9,466.6 298.2,464.4 296.7,462.1 295.3,459.7 294.1,457.4 293.0,455.0 292.0,452.6 291.2,450.1 290.5,447.5 290.0,444.9 289.5,442.3 289.2,439.7 289.1,437.2 289.0,434.7 289.2,432.1 289.5,429.5 289.9,426.9 290.4,424.4 291.0,421.9 291.6,419.5 292.3,417.1 293.1,414.8 294.0,412.7 294.9,410.5 296.0,408.4 297.1,406.4 298.2,404.4 299.4,402.4 300.7,400.4 302.0,398.4 303.4,396.3 304.9,394.3 306.4,392.3 308.0,390.4 309.5,388.5 311.0,386.8 312.4,385.3 313.7,383.9 315.0,382.6 316.3,381.4 317.5,380.3 318.7,379.3 319.9,378.4 321.2,377.6 322.5,376.9 323.9,376.3 325.3,375.8 326.6,375.4 328.1,375.1 329.5,374.8 331.0,374.7 332.6,374.5" fill="#707070" filter="url(#b3)"/>
<polygon points="334.1,377.5 335.8,377.5 337.6,377.5 339.5,377.5 341.4,377.6 343.3,377.8 345.2,378.1 346.9,378.5 348.5,379.1 349.9,379.8 351.2,380.6 352.4,381.5 353.5,382.6 354.6,383.7 355.7,385.0 356.8,386.3 358.0,387.8 359.2,389.5 360.4,391.3 361.7,393.3 362.9,395.4 364.2,397.5 365.4,399.7 366.5,401.8 367.6,403.8 368.6,405.8 369.7,407.8 370.7,409.9 371.6,411.9 372.5,413.9 373.4,415.9 374.1,417.8 374.7,419.7 375.2,421.6 375.6,423.4 375.9,425.1 376.2,426.8 376.4,428.5 376.4,430.3 376.4,432.2 376.3,434.1 376.2,436.1 375.9,438.3 375.6,440.5 375.1,442.7 374.6,445.0 374.0,447.2 373.2,449.4 372.4,451.6 371.3,453.7 370.2,455.8 368.9,457.9 367.5,460.0 366.0,462.0 364.5,464.0 362.9,465.8 361.2,467.5 359.5,469.0 357.6,470.5 355.7,471.9 353.7,473.2 351.7,474.3 349.6,475.4 347.5,476.3 345.3,477.1 343.0,477.7 340.7,478.2 338.3,478.6 335.8,478.9 333.4,479.0 330.9,479.1 328.5,478.9 326.2,478.7 323.9,478.4 321.6,477.9 319.3,477.3 317.0,476.6 314.8,475.8 312.6,474.8 310.6,473.6 308.6,472.3 306.7,470.8 304.9,469.1 303.2,467.2 301.5,465.2 299.9,463.0 298.4,460.8 297.1,458.6 295.9,456.4 294.9,454.2 294.0,451.8 293.2,449.4 292.6,447.0 292.0,444.5 291.6,442.1 291.3,439.6 291.2,437.2 291.1,434.8 291.3,432.3 291.5,429.9 291.9,427.4 292.4,425.0 293.0,422.6 293.6,420.3 294.3,418.1 295.0,415.9 295.8,413.8 296.8,411.8 297.7,409.8 298.8,407.9 299.9,406.0 301.0,404.1 302.2,402.2 303.5,400.3 304.8,398.3 306.2,396.4 307.7,394.5 309.2,392.7 310.6,390.9 312.0,389.3 313.4,387.8 314.6,386.5 315.8,385.3 317.0,384.1 318.2,383.1 319.3,382.2 320.5,381.3 321.7,380.5 323.0,379.9 324.3,379.3 325.6,378.8 326.9,378.4 328.3,378.1 329.6,377.9 331.1,377.7 332.6,377.6" fill="#5a5a5a" filter="url(#b2)"/>
<polygon points="334.0,381.8 335.5,381.8 337.2,381.8 339.0,381.8 340.7,381.9 342.5,382.1 344.2,382.4 345.8,382.7 347.3,383.3 348.6,383.9 349.8,384.7 350.9,385.5 352.0,386.5 353.0,387.5 354.0,388.7 355.0,390.0 356.1,391.4 357.2,392.9 358.4,394.6 359.6,396.4 360.7,398.4 361.9,400.4 363.0,402.4 364.0,404.3 365.0,406.2 366.0,408.1 367.0,410.0 367.9,411.8 368.8,413.7 369.6,415.6 370.4,417.4 371.0,419.2 371.6,421.0 372.1,422.7 372.5,424.3 372.8,426.0 373.0,427.6 373.2,429.2 373.2,430.8 373.2,432.5 373.1,434.3 373.0,436.2 372.7,438.2 372.4,440.2 372.0,442.3 371.5,444.4 371.0,446.5 370.3,448.5 369.4,450.5 368.5,452.5 367.4,454.4 366.2,456.4 365.0,458.3 363.6,460.2 362.1,462.0 360.6,463.7 359.1,465.3 357.5,466.7 355.8,468.1 354.0,469.4 352.2,470.5 350.3,471.6 348.3,472.6 346.3,473.4 344.3,474.2 342.2,474.8 340.1,475.2 337.8,475.6 335.6,475.9 333.3,476.0 331.0,476.0 328.8,475.9 326.6,475.7 324.5,475.4 322.3,474.9 320.2,474.4 318.1,473.7 316.0,473.0 314.0,472.0 312.1,471.0 310.3,469.8 308.6,468.4 306.9,466.8 305.2,465.0 303.7,463.1 302.2,461.1 300.8,459.1 299.6,457.1 298.5,455.0 297.6,452.9 296.7,450.8 296.0,448.5 295.4,446.3 294.9,444.0 294.5,441.7 294.3,439.4 294.1,437.2 294.1,434.9 294.2,432.7 294.5,430.4 294.8,428.1 295.3,425.9 295.8,423.7 296.4,421.5 297.0,419.4 297.7,417.5 298.4,415.5 299.3,413.6 300.2,411.8 301.2,410.0 302.2,408.2 303.3,406.4 304.4,404.7 305.5,402.9 306.8,401.1 308.1,399.3 309.4,397.6 310.8,395.9 312.2,394.2 313.5,392.7 314.7,391.4 315.9,390.1 317.0,389.0 318.1,387.9 319.2,387.0 320.2,386.1 321.3,385.3 322.5,384.6 323.6,384.0 324.8,383.4 326.0,383.0 327.3,382.6 328.5,382.4 329.8,382.1 331.1,382.0 332.5,381.9" fill="#505050" filter="url(#b4)"/>
<circle cx="206.4" cy="122" r="3.0" fill="#fff" opacity="0.2" filter="url(#b1)"/>
<circle cx="206.4" cy="122" r="1.5" fill="#f0f0f0" filter="url(#sb)"/>
<circle cx="284.6" cy="134.6" r="1.2" fill="#e6e6e6" filter="url(#sb)"/>
<circle cx="97.6" cy="117.9" r="0.8" fill="#c8c8c8" filter="url(#sb)"/>
<circle cx="108.6" cy="120.4" r="0.8" fill="#c8c8c8" filter="url(#sb)"/>
<circle cx="120.6" cy="161" r="1.0" fill="#828282" filter="url(#sb)"/>
<circle cx="196" cy="185" r="1.0" fill="#aaaaaa" filter="url(#sb)"/>
<circle cx="151.2" cy="228.9" r="1.3" fill="#f0f0f0" filter="url(#sb)"/>
<circle cx="242.6" cy="267.7" r="4.0" fill="#fff" opacity="0.2" filter="url(#b1)"/>
<circle cx="242.6" cy="267.7" r="2.0" fill="#ffffff" filter="url(#sb)"/>
<circle cx="223" cy="311.8" r="4.0" fill="#fff" opacity="0.2" filter="url(#b1)"/>
<circle cx="223" cy="311.8" r="2.0" fill="#ffffff" filter="url(#sb)"/>
<circle cx="110.2" cy="343.3" r="3.6" fill="#fff" opacity="0.2" filter="url(#b1)"/>
<circle cx="110.2" cy="343.3" r="1.8" fill="#ffffff" filter="url(#sb)"/>
<circle cx="77" cy="340.2" r="1.0" fill="#c8c8c8" filter="url(#sb)"/>
<circle cx="133.2" cy="279.3" r="0.8" fill="#aaaaaa" filter="url(#sb)"/>
<circle cx="274.2" cy="326" r="1.0" fill="#787878" filter="url(#sb)"/>
<circle cx="264.7" cy="177.8" r="1.0" fill="#6e6e6e" filter="url(#sb)"/>
<circle cx="376.7" cy="117.9" r="1.0" fill="#d2d2d2" filter="url(#sb)"/>
<circle cx="468.2" cy="122.6" r="1.2" fill="#e6e6e6" filter="url(#sb)"/>
<circle cx="490.9" cy="115.4" r="1.0" fill="#dcdcdc" filter="url(#sb)"/>
<circle cx="379.9" cy="166.8" r="1.4" fill="#fafafa" filter="url(#sb)"/>
<circle cx="476.7" cy="173.7" r="3.2" fill="#fff" opacity="0.2" filter="url(#b1)"/>
<circle cx="476.7" cy="173.7" r="1.6" fill="#ffffff" filter="url(#sb)"/>
<circle cx="334.2" cy="197.4" r="1.0" fill="#c8c8c8" filter="url(#sb)"/>
<circle cx="525" cy="188.8" r="1.0" fill="#a0a0a0" filter="url(#sb)"/>
<circle cx="416" cy="214" r="1.0" fill="#6e6e6e" filter="url(#sb)"/>
<circle cx="345" cy="156.7" r="1.0" fill="#6e6e6e" filter="url(#sb)"/>
<circle cx="445.5" cy="168.3" r="1.0" fill="#787878" filter="url(#sb)"/>
<circle cx="506.6" cy="261.4" r="1.0" fill="#bebebe" filter="url(#sb)"/>
<circle cx="460.3" cy="302.4" r="1.3" fill="#f0f0f0" filter="url(#sb)"/>
<circle cx="336.7" cy="308.7" r="4.0" fill="#fff" opacity="0.2" filter="url(#b1)"/>
<circle cx="336.7" cy="308.7" r="2.0" fill="#ffffff" filter="url(#sb)"/>
<circle cx="518.6" cy="308.7" r="1.0" fill="#c8c8c8" filter="url(#sb)"/>
<circle cx="507.6" cy="327" r="1.0" fill="#b4b4b4" filter="url(#sb)"/>
<circle cx="143.9" cy="358" r="1.0" fill="#787878" filter="url(#sb)"/>
<circle cx="170.1" cy="396.1" r="4.0" fill="#fff" opacity="0.2" filter="url(#b1)"/>
<circle cx="170.1" cy="396.1" r="2.0" fill="#ffffff" filter="url(#sb)"/>
<circle cx="168.5" cy="407.2" r="4.0" fill="#fff" opacity="0.2" filter="url(#b1)"/>
<circle cx="168.5" cy="407.2" r="2.0" fill="#ffffff" filter="url(#sb)"/>
<circle cx="164.4" cy="404.6" r="1.3" fill="#dcdcdc" filter="url(#sb)"/>
<circle cx="125" cy="410" r="4.0" fill="#fff" opacity="0.2" filter="url(#b1)"/>
<circle cx="125" cy="410" r="2.0" fill="#ffffff" filter="url(#sb)"/>
<circle cx="180.2" cy="413.2" r="1.0" fill="#b4b4b4" filter="url(#sb)"/>
<circle cx="201" cy="410" r="1.0" fill="#787878" filter="url(#sb)"/>
<circle cx="238.5" cy="426.7" r="1.0" fill="#bebebe" filter="url(#sb)"/>
<circle cx="176.4" cy="431.5" r="1.0" fill="#787878" filter="url(#sb)"/>
<circle cx="165.4" cy="380" r="1.0" fill="#6e6e6e" filter="url(#sb)"/>
<circle cx="107.7" cy="452.6" r="1.4" fill="#ffffff" filter="url(#sb)"/>
<circle cx="112.4" cy="446.6" r="1.1" fill="#aaaaaa" filter="url(#sb)"/>
<circle cx="210.5" cy="476.2" r="1.0" fill="#787878" filter="url(#sb)"/>
<circle cx="108.6" cy="519.1" r="1.2" fill="#dcdcdc" filter="url(#sb)"/>
<circle cx="155.3" cy="542.8" r="4.4" fill="#fff" opacity="0.2" filter="url(#b1)"/>
<circle cx="155.3" cy="542.8" r="2.2" fill="#ffffff" filter="url(#sb)"/>
<circle cx="107.7" cy="557" r="1.2" fill="#dcdcdc" filter="url(#sb)"/>
<circle cx="169.2" cy="552.9" r="1.0" fill="#787878" filter="url(#sb)"/>
<circle cx="60.7" cy="509.3" r="1.0" fill="#787878" filter="url(#sb)"/>
<circle cx="260" cy="370" r="1.0" fill="#787878" filter="url(#sb)"/>
<circle cx="141.7" cy="540.2" r="1.0" fill="#787878" filter="url(#sb)"/>
<circle cx="278.9" cy="557.6" r="1.0" fill="#787878" filter="url(#sb)"/>
<circle cx="484" cy="422" r="4.4" fill="#fff" opacity="0.2" filter="url(#b1)"/>
<circle cx="484" cy="422" r="2.2" fill="#ffffff" filter="url(#sb)"/>
<circle cx="519.3" cy="521.3" r="3.2" fill="#fff" opacity="0.2" filter="url(#b1)"/>
<circle cx="519.3" cy="521.3" r="1.6" fill="#ffffff" filter="url(#sb)"/>
<circle cx="327.2" cy="572.4" r="6.6" fill="#fff" opacity="0.2" filter="url(#b1)"/>
<circle cx="327.2" cy="572.4" r="3.3" fill="#ffffff" filter="url(#sb)"/>
<circle cx="512.3" cy="403" r="1.0" fill="#b4b4b4" filter="url(#sb)"/>
<circle cx="435" cy="353.6" r="3.0" fill="#fff" opacity="0.2" filter="url(#b1)"/>
<circle cx="435" cy="353.6" r="1.5" fill="#fafafa" filter="url(#sb)"/>
<circle cx="415.5" cy="380.4" r="1.1" fill="#c8c8c8" filter="url(#sb)"/>
<circle cx="320.6" cy="413.2" r="3.2" fill="#fff" opacity="0.2" filter="url(#b1)"/>
<circle cx="320.6" cy="413.2" r="1.6" fill="#ffffff" filter="url(#sb)"/>
<circle cx="331" cy="434" r="3.2" fill="#fff" opacity="0.2" filter="url(#b1)"/>
<circle cx="331" cy="434" r="1.6" fill="#ffffff" filter="url(#sb)"/>
<circle cx="381.5" cy="366.8" r="4.0" fill="#fff" opacity="0.2" filter="url(#b1)"/>
<circle cx="381.5" cy="366.8" r="2.0" fill="#ffffff" filter="url(#sb)"/>
<circle cx="368.8" cy="398.3" r="3.2" fill="#fff" opacity="0.2" filter="url(#b1)"/>
<circle cx="368.8" cy="398.3" r="1.6" fill="#ffffff" filter="url(#sb)"/>
<circle cx="381.5" cy="496.7" r="0.8" fill="#c8c8c8" filter="url(#sb)"/>
<rect x="59" y="114" width="468" height="466" filter="url(#noise)" mask="url(#nm)" style="mix-blend-mode:overlay" opacity="1"/>
<circle cx="188" cy="185.7" r="3.0" fill="#000" filter="url(#sb)" opacity="0.85"/>
<circle cx="92.2" cy="251.3" r="2.0" fill="#000" filter="url(#sb)" opacity="0.85"/>
<circle cx="93.8" cy="267.7" r="1.5" fill="#000" filter="url(#sb)" opacity="0.85"/>
<circle cx="255.9" cy="192.6" r="1.5" fill="#000" filter="url(#sb)" opacity="0.85"/>
<circle cx="246.7" cy="255" r="1.5" fill="#000" filter="url(#sb)" opacity="0.85"/>
<circle cx="391" cy="263.9" r="2.0" fill="#000" filter="url(#sb)" opacity="0.85"/>
<circle cx="514.8" cy="247.2" r="1.5" fill="#000" filter="url(#sb)" opacity="0.85"/>
<circle cx="460.3" cy="318.1" r="1.5" fill="#000" filter="url(#sb)" opacity="0.85"/>
<circle cx="294.7" cy="237.7" r="3.5" fill="#000" filter="url(#sb)" opacity="0.3"/>
<circle cx="249.6" cy="352" r="3.0" fill="#000" filter="url(#sb)" opacity="0.85"/>
<rect x="59" y="114" width="1" height="466" fill="#8a8a8a"/>
<rect x="526" y="114" width="1" height="466" fill="#8a8a8a"/>
<rect x="59" y="114" width="3" height="1.5" fill="#fff"/>
</g>
<circle cx="314.2" cy="350" r="27.2" fill="#000"/>
<rect x="306.5" y="344.5" width="18" height="17" fill="none" stroke="#f00" stroke-width="1.2"/>
<g fill="#000"><rect x="390" y="348.3" width="23.5" height="1.6"/><rect x="431.3" y="348.3" width="24.5" height="1.6"/><rect x="421.8" y="317" width="1.6" height="23"/><rect x="421.8" y="357.7" width="1.6" height="23.3"/></g>
<rect x="472.5" y="411.5" width="22" height="23" fill="none" stroke="#f00" stroke-width="1.4"/>
<polyline points="45.5,335 45.5,314.5 58.5,334.5 58.5,314" fill="none" stroke="#f00" stroke-width="1.3"/>
<polyline points="298.5,554.5 285.5,554.5 285.5,574.5 298.5,574.5" fill="none" stroke="#f00" stroke-width="1.3"/>
<line x1="285.5" y1="564.5" x2="293.5" y2="564.5" stroke="#f00" stroke-width="1.3"/>
</svg>
<!--/IMAGE-->

<!-- filename -->
<div class="fld" style="left:39px;top:589px;width:374px;height:27px;"></div>
<div class="t" style="left:46px;top:597px">/export/home/pmas/dat/testag_040910/testag_00006a.fits</div>
<!--CUR1-->
<div class="eo" style="left:425px;top:587px;width:99px;height:31px;"><div class="ei"></div></div>
<div class="blk" style="left:430px;top:592px;width:20px;height:20px;box-shadow:0 0 0 1px #cdcdcd;background:radial-gradient(circle at 10.5px 9.5px,#fff 0,#e0e0e0 1px,#999 3px,#444 5px,#000 6.8px);"></div>
<div class="blk" style="left:453px;top:592px;width:20px;height:20px;box-shadow:0 0 0 1px #cdcdcd;"></div>
<div class="blk" style="left:476px;top:592px;width:20px;height:20px;box-shadow:0 0 0 1px #cdcdcd;"></div>
<div class="blk" style="left:499px;top:592px;width:20px;height:20px;box-shadow:0 0 0 1px #cdcdcd;"></div>

<!-- filter row -->
<div class="t" style="left:38px;top:635px">Filter</div>
<div class="fld" style="left:82px;top:627px;width:122px;height:27px;"></div>
<div class="t" style="left:125px;top:635px">initialized</div>
<div class="t" style="left:228px;top:635px">Tile No</div>
<div class="fld" style="left:278px;top:627px;width:32px;height:27px;"></div>
<div class="t" style="left:346px;top:635px">Exposure Time</div>
<div class="fld" style="left:438px;top:627px;width:62px;height:27px;"></div>
<div class="s" style="left:506px;top:634px">sec</div>

<!-- buttons -->
<div class="btn" style="left:39px;top:665px;width:96px;height:26px;"></div>
<div class="t" style="left:53px;top:672px">Acquisition</div>
<div class="btn" style="left:142px;top:665px;width:96px;height:26px;"></div>
<div class="t" style="left:172px;top:672px">Window</div>
<div class="btn" style="left:278px;top:665px;width:96px;height:26px;"></div>
<div class="t" style="left:296px;top:672px">Autoguider</div>
<div class="btn" style="left:414px;top:665px;width:56px;height:26px;"></div>
<div class="t" style="left:433px;top:672px">BSW</div>
<div class="eo" style="left:482px;top:663px;width:76px;height:30px;"><div class="ei"></div></div>
<div class="blk" style="left:487px;top:668px;width:20px;height:20px;box-shadow:0 0 0 1px #cdcdcd;"></div>
<div class="blk" style="left:510px;top:668px;width:20px;height:20px;box-shadow:0 0 0 1px #cdcdcd;"></div>
<div class="blk" style="left:533px;top:668px;width:20px;height:20px;box-shadow:0 0 0 1px #cdcdcd;"></div>

<!-- panel 2 -->
<div class="t" style="left:644px;top:92px">Window</div>
<div class="blk" style="left:588px;top:109px;width:150px;height:150px;"></div>
<div class="t" style="left:617px;top:295px">Cross Section X</div>
<div class="blk" style="left:588px;top:312px;width:150px;height:150px;"></div>
<div class="t" style="left:617px;top:488px">Cross Section Y</div>
<div class="blk" style="left:588px;top:505px;width:150px;height:150px;"></div>
<!-- panel 3 -->
<div class="t" style="left:816px;top:92px">FWHM X / FWHM Y</div>
<div class="blk" style="left:765px;top:109px;width:200px;height:150px;"></div>
<div class="t" style="left:813px;top:295px">delta X / delta Y</div>
<div class="blk" style="left:765px;top:312px;width:200px;height:150px;"></div>
<div class="t" style="left:852px;top:488px">Flux</div>
<div class="blk" style="left:765px;top:505px;width:200px;height:150px;"></div>

<!-- bottom row -->
<div class="t" style="left:23px;top:727px">Object</div>
<div class="fld" style="left:67px;top:719px;width:134px;height:27px;"></div>
<div class="t" style="left:225px;top:727px">Cut Levels</div>
<div class="fld" style="left:293px;top:719px;width:110px;height:27px;"></div>
<div class="t" style="left:300px;top:727px">550,750</div>
<div class="t" style="left:427px;top:727px">FWHM: x</div>
<div class="fld" style="left:483px;top:719px;width:62px;height:27px;"></div>
<div class="t" style="left:557px;top:727px">y</div>
<div class="fld" style="left:577px;top:719px;width:62px;height:27px;"></div>
<div class="s" style="left:663px;top:726px;letter-spacing:-0.9px">Peak</div>
<div class="fld" style="left:701px;top:719px;width:86px;height:27px;"></div>
<div class="s" style="left:811px;top:726px">Flux</div>
<div class="fld" style="left:849px;top:719px;width:86px;height:27px;"></div>
<!--CURSORS-->
<svg class="a" style="left:44px;top:596px" width="3" height="13" shape-rendering="crispEdges"><path d="M0 0h1v1h-1zM2 0h1v1h-1zM1 1h1v1h-1zM1 3h1v1h-1zM1 5h1v1h-1zM1 7h1v1h-1zM1 9h1v1h-1zM1 11h1v1h-1zM0 12h1v1h-1zM2 12h1v1h-1z" fill="#000"/></svg>
<svg class="a" style="left:87px;top:634px" width="3" height="13" shape-rendering="crispEdges"><path d="M0 0h1v1h-1zM2 0h1v1h-1zM1 1h1v1h-1zM1 3h1v1h-1zM1 5h1v1h-1zM1 7h1v1h-1zM1 9h1v1h-1zM1 11h1v1h-1zM0 12h1v1h-1zM2 12h1v1h-1z" fill="#000"/></svg>
<svg class="a" style="left:283px;top:634px" width="3" height="13" shape-rendering="crispEdges"><path d="M0 0h1v1h-1zM2 0h1v1h-1zM1 1h1v1h-1zM1 3h1v1h-1zM1 5h1v1h-1zM1 7h1v1h-1zM1 9h1v1h-1zM1 11h1v1h-1zM0 12h1v1h-1zM2 12h1v1h-1z" fill="#000"/></svg>
<svg class="a" style="left:443px;top:634px" width="3" height="13" shape-rendering="crispEdges"><path d="M0 0h1v1h-1zM2 0h1v1h-1zM1 1h1v1h-1zM1 3h1v1h-1zM1 5h1v1h-1zM1 7h1v1h-1zM1 9h1v1h-1zM1 11h1v1h-1zM0 12h1v1h-1zM2 12h1v1h-1z" fill="#000"/></svg>
<svg class="a" style="left:72px;top:726px" width="3" height="13" shape-rendering="crispEdges"><path d="M0 0h1v1h-1zM2 0h1v1h-1zM1 1h1v1h-1zM1 3h1v1h-1zM1 5h1v1h-1zM1 7h1v1h-1zM1 9h1v1h-1zM1 11h1v1h-1zM0 12h1v1h-1zM2 12h1v1h-1z" fill="#000"/></svg>
<svg class="a" style="left:298px;top:726px" width="3" height="13" shape-rendering="crispEdges"><path d="M0 0h1v1h-1zM2 0h1v1h-1zM1 1h1v1h-1zM1 3h1v1h-1zM1 5h1v1h-1zM1 7h1v1h-1zM1 9h1v1h-1zM1 11h1v1h-1zM0 12h1v1h-1zM2 12h1v1h-1z" fill="#000"/></svg>
<svg class="a" style="left:488px;top:726px" width="3" height="13" shape-rendering="crispEdges"><path d="M0 0h1v1h-1zM2 0h1v1h-1zM1 1h1v1h-1zM1 3h1v1h-1zM1 5h1v1h-1zM1 7h1v1h-1zM1 9h1v1h-1zM1 11h1v1h-1zM0 12h1v1h-1zM2 12h1v1h-1z" fill="#000"/></svg>
<svg class="a" style="left:582px;top:726px" width="3" height="13" shape-rendering="crispEdges"><path d="M0 0h1v1h-1zM2 0h1v1h-1zM1 1h1v1h-1zM1 3h1v1h-1zM1 5h1v1h-1zM1 7h1v1h-1zM1 9h1v1h-1zM1 11h1v1h-1zM0 12h1v1h-1zM2 12h1v1h-1z" fill="#000"/></svg>
<svg class="a" style="left:706px;top:726px" width="3" height="13" shape-rendering="crispEdges"><path d="M0 0h1v1h-1zM2 0h1v1h-1zM1 1h1v1h-1zM1 3h1v1h-1zM1 5h1v1h-1zM1 7h1v1h-1zM1 9h1v1h-1zM1 11h1v1h-1zM0 12h1v1h-1zM2 12h1v1h-1z" fill="#000"/></svg>
<svg class="a" style="left:854px;top:726px" width="3" height="13" shape-rendering="crispEdges"><path d="M0 0h1v1h-1zM2 0h1v1h-1zM1 1h1v1h-1zM1 3h1v1h-1zM1 5h1v1h-1zM1 7h1v1h-1zM1 9h1v1h-1zM1 11h1v1h-1zM0 12h1v1h-1zM2 12h1v1h-1z" fill="#000"/></svg>
<!--/CURSORS-->
</body></html>
